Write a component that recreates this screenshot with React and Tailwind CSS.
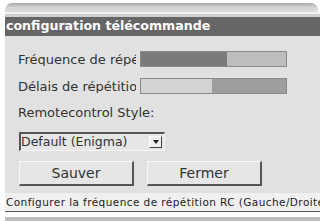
export default function App() {
  return (
    <div className="w-[320px] h-[221px] bg-white overflow-hidden" style={{ fontFamily: '"DejaVu Sans", sans-serif' }}>
      {/* window frame top */}
      <div className="ml-[5px] mt-[3px] mr-[2px] h-[9px] rounded-t-[7px] bg-gradient-to-b from-[#a9a9a9] via-[#d4d4d4] to-[#dcdcdc]" />
      <div className="ml-[5px] h-[2px] bg-[#f2f2f2]" />
      <div className="ml-[5px] h-[3px] bg-[#cfcfcf]" />

      {/* title */}
      <div className="ml-[5px] h-[19px] bg-[#666666] flex items-center pl-[1px]">
        <span className="text-white text-[12.6px] font-bold leading-none">configuration télécommande</span>
      </div>

      {/* body */}
      <div className="ml-[5px] bg-[#e1e1e1] pt-[15px] pl-[13px] h-[157px] text-[#333] text-[13px]">
        <div className="flex items-center h-[16px]">
          <div className="w-[118px] overflow-hidden whitespace-nowrap leading-none">Fréquence de répétition</div>
          <div className="w-[147px] h-[16px] border border-[#8a8a8a] flex ml-[4px]">
            <div className="w-[86px] bg-[#7b7b7b]" />
            <div className="flex-1 bg-[#bdbdbd]" />
          </div>
        </div>
        <div className="flex items-center h-[16px] mt-[11px]">
          <div className="w-[118px] overflow-hidden whitespace-nowrap leading-none">Délais de répétition</div>
          <div className="w-[147px] h-[16px] border border-[#8a8a8a] flex ml-[4px]">
            <div className="w-[71px] bg-[#d3d3d3]" />
            <div className="flex-1 bg-[#9e9e9e]" />
          </div>
        </div>
        <div className="mt-[12px] leading-none h-[14px]">Remotecontrol Style:</div>
        <div className="mt-[12px] ml-[1px] w-[146px] h-[19px] bg-[#e6e6e6] border-l-2 border-t-2 border-[#555] border-r border-b border-r-[#f5f5f5] border-b-[#f5f5f5] flex items-center">
          <span className="flex-1 leading-none text-[12.5px]">Default (Enigma)</span>
          <div className="w-[13px] h-[12px] mr-[2px] bg-[#eeeeee] border-r border-b border-[#444] border-l border-t border-l-white border-t-white flex items-center justify-center">
            <svg width="6" height="4" viewBox="0 0 6 4"><path d="M0 0h6L3 4z" fill="#222" /></svg>
          </div>
        </div>
        <div className="flex mt-[10px] gap-[13px] ml-[1px]">
          <div className="w-[115px] h-[25px] bg-[#e6e6e6] border-t border-l border-[#f8f8f8] border-r-2 border-b-2 border-r-[#555] border-b-[#555] flex items-center justify-center text-[14px] text-[#333]">Sauver</div>
          <div className="w-[115px] h-[25px] bg-[#e6e6e6] border-t border-l border-[#f8f8f8] border-r-2 border-b-2 border-r-[#555] border-b-[#555] flex items-center justify-center text-[14px] text-[#333]">Fermer</div>
        </div>
      </div>

      {/* status bar */}
      <div className="ml-[5px] h-[19px] bg-[#f0f0f0] border-b border-[#555] flex items-center pl-[1px] overflow-hidden">
        <span className="whitespace-nowrap text-[10.5px] leading-none text-[#222] tracking-[0.42px]">Configurer la fréquence de répétition RC (Gauche/Droite)</span>
      </div>
      <div className="ml-[5px] mt-[5px] h-[6px] bg-[#bdbdbd]" />
    </div>
  );
}
